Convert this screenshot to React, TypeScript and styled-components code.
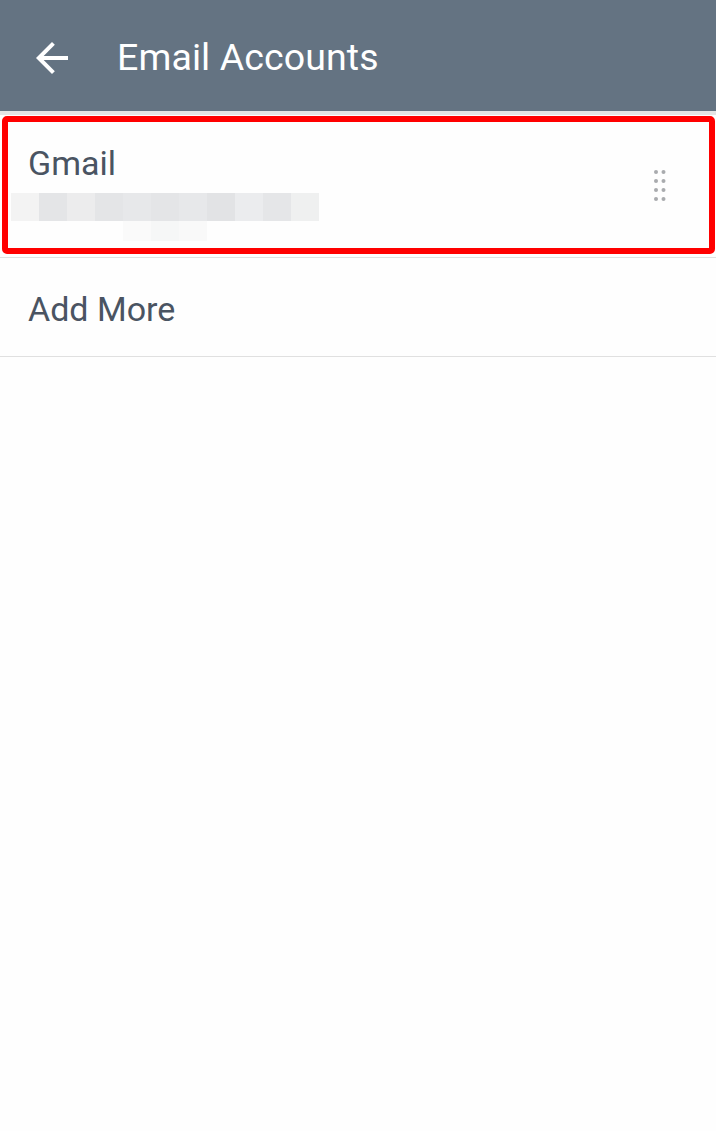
import React, { FC } from "react"
import styled, { createGlobalStyle } from "styled-components"

const GlobalStyle = createGlobalStyle`
  html, body {
    margin: 0;
    padding: 0;
    background: #fefefe;
    font-family: Roboto, "Liberation Sans", sans-serif;
  }
`

const blurTop = ["#f3f3f3", "#e4e5e7", "#ececed", "#e4e5e7", "#e7e8ea", "#e4e5e7", "#e7e8ea", "#e2e3e5", "#ebecee", "#e5e6e8", "#eff0f0"]
const blurBottom = ["#fafafa", "#f6f7f7", "#f9f9f9"]

const BackArrow: FC = () => (
  <svg width="48" height="48" viewBox="0 0 24 24">
    <path fill="#fff" d="M20 11H7.83l5.59-5.59L12 4l-8 8 8 8 1.41-1.41L7.83 13H20v-2z" />
  </svg>
)

const DragHandle: FC = () => (
  <svg width="14" height="34" viewBox="0 0 14 34">
    {[0, 1, 2, 3].map(r =>
      [0, 1].map(c => (
        <circle key={`${r}-${c}`} cx={3 + c * 7.5} cy={3 + r * 9} r="2" fill="#a9abae" />
      ))
    )}
  </svg>
)

const App: FC = () => (
  <Page>
    <GlobalStyle />
    <Header>
      <IconSlot><BackArrow /></IconSlot>
      <Title>Email Accounts</Title>
    </Header>
    <List>
      <AccountRow>
        <Highlight />
        <AccountText>
          <RowTitle>Gmail</RowTitle>
          <Pixelated>
            <BlurLine>
              {blurTop.map((c, i) => <Block key={i} style={{ background: c }} />)}
            </BlurLine>
            <BlurLine $indent={112} $short>
              {blurBottom.map((c, i) => <Block key={i} style={{ background: c }} />)}
            </BlurLine>
          </Pixelated>
        </AccountText>
        <DragHandle />
      </AccountRow>
      <AddRow>
        <RowTitle>Add More</RowTitle>
      </AddRow>
    </List>
  </Page>
)

const Page = styled.div`
  width: 716px;
  min-height: 1131px;
  background: #fefefe;
`

const Header = styled.header`
  height: 111px;
  background: #647382;
  display: flex;
  align-items: center;
  padding-left: 28px;
  box-sizing: border-box;
`

const IconSlot = styled.div`
  width: 48px;
  height: 48px;
  margin-top: 4px;
  display: flex;
`

const Title = styled.h1`
  margin: 2px 0 0 41px;
  color: #fff;
  font-size: 37.5px;
  font-weight: 400;
  letter-spacing: 0.1px;
`

const List = styled.div`
  border-top: 4px solid #e4e4e4;
`

const AccountRow = styled.div`
  position: relative;
  height: 143px;
  display: flex;
  align-items: center;
  justify-content: space-between;
  padding: 0 49px 0 0;
  border-bottom: 1px solid #e0e0e0;
  box-sizing: border-box;
`

const Highlight = styled.div`
  position: absolute;
  left: 2px;
  right: 1px;
  top: 1px;
  bottom: 3px;
  border: 6px solid #ff0000;
  border-radius: 5px;
  pointer-events: none;
`

const AccountText = styled.div`
  display: flex;
  flex-direction: column;
  padding-top: 12px;
`

const RowTitle = styled.div`
  color: #4a5462;
  font-size: 34px;
  line-height: 40px;
  padding-left: 28px;
`

const Pixelated = styled.div`
  margin-top: 10px;
  padding-left: 11px;
`

const BlurLine = styled.div<{ $indent?: number; $short?: boolean }>`
  display: flex;
  margin-left: ${p => p.$indent ?? 0}px;
  height: ${p => (p.$short ? 20 : 28)}px;
`

const Block = styled.div`
  width: 28px;
  height: 100%;
`

const AddRow = styled.div`
  height: 99px;
  display: flex;
  align-items: center;
  padding-top: 4px;
  border-bottom: 1px solid #e0e0e0;
  box-sizing: border-box;
`

export default App
